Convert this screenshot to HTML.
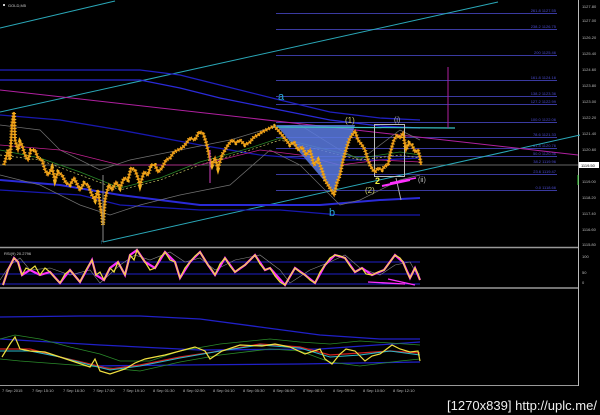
<!DOCTYPE html>
<html><head><meta charset="utf-8"><style>
html,body{margin:0;padding:0;background:#000;width:600px;height:415px;overflow:hidden}
svg{display:block}
text{font-family:"Liberation Sans",sans-serif}
</style></head><body>
<svg width="600" height="415" viewBox="0 0 600 415" xmlns="http://www.w3.org/2000/svg">
<rect width="600" height="415" fill="#000"/>
<rect x="3" y="4" width="2" height="2" fill="#ccc"/>
<text x="8" y="7" font-size="4" fill="#ccc">GOLD,M5</text>
<line x1="578.5" y1="0" x2="578.5" y2="386" stroke="#bbb" stroke-width="1"/>
<g font-size="4" fill="#bbb">
<text x="582" y="8">1127.80</text><text x="582" y="22">1127.00</text><text x="582" y="39">1126.20</text><text x="582" y="55">1125.40</text><text x="582" y="71">1124.60</text><text x="582" y="87">1123.80</text><text x="582" y="103">1123.00</text><text x="582" y="119">1122.20</text><text x="582" y="135">1121.40</text><text x="582" y="151">1120.60</text><text x="582" y="183">1119.00</text><text x="582" y="199">1118.20</text><text x="582" y="215">1117.40</text><text x="582" y="231">1116.60</text><text x="582" y="246">1115.80</text>
<text x="582" y="258">100</text><text x="582" y="274">50</text><text x="582" y="284">0</text>
</g>
<rect x="579" y="162" width="20" height="6" fill="#fff"/>
<text x="581" y="167" font-size="4" fill="#000">1119.50</text>
<line x1="578" y1="175" x2="578" y2="185" stroke="#3c3" stroke-width="1"/>
<line x1="0" y1="247.5" x2="578" y2="247.5" stroke="#999" stroke-width="1.5"/>
<line x1="0" y1="288" x2="578" y2="288" stroke="#999" stroke-width="1.5"/>
<line x1="0" y1="385.5" x2="578" y2="385.5" stroke="#999" stroke-width="1"/>
<g stroke="#3a3aa0" stroke-width="1">
<line x1="276" y1="13.5" x2="557" y2="13.5"/><line x1="276" y1="29.5" x2="557" y2="29.5"/><line x1="276" y1="55.5" x2="557" y2="55.5"/><line x1="276" y1="80.5" x2="557" y2="80.5"/><line x1="276" y1="96.5" x2="557" y2="96.5"/><line x1="276" y1="104.5" x2="557" y2="104.5"/><line x1="276" y1="122.5" x2="557" y2="122.5"/><line x1="276" y1="137.5" x2="557" y2="137.5"/><line x1="276" y1="148.5" x2="557" y2="148.5"/><line x1="276" y1="156.5" x2="557" y2="156.5"/><line x1="276" y1="174.5" x2="557" y2="174.5"/><line x1="276" y1="190.5" x2="557" y2="190.5"/>
</g>
<line x1="0" y1="165" x2="578" y2="165" stroke="#888" stroke-width="0.7"/>
<g font-size="4" fill="#4a4ad0" text-anchor="end">
<text x="556" y="12">261.8 1127.55</text><text x="556" y="28">238.2 1126.75</text><text x="556" y="54">200 1125.46</text><text x="556" y="79">161.8 1124.16</text><text x="556" y="95">138.2 1123.36</text><text x="556" y="103">127.2 1122.99</text><text x="556" y="121">100.0 1122.06</text><text x="556" y="136">78.6 1121.33</text><text x="556" y="147">61.8 1120.76</text><text x="556" y="155">50.0 1120.36</text><text x="556" y="163">38.2 1119.96</text><text x="556" y="173">23.6 1119.47</text><text x="556" y="189">0.0 1118.66</text>
</g>
<line x1="0" y1="28" x2="115" y2="1" stroke="#2aa8b8" stroke-width="1"/>
<line x1="0" y1="112" x2="498" y2="2" stroke="#2aa8b8" stroke-width="1"/>
<line x1="103" y1="242" x2="580" y2="135" stroke="#2aa8b8" stroke-width="1"/>
<line x1="0" y1="90" x2="578" y2="155" stroke="#b020a0" stroke-width="1"/>
<g fill="none" stroke-width="1.3">
<polyline stroke="#2020c0" points="0,70 140,70 180,75 220,85 280,100 330,112 380,118 420,120"/>
<polyline stroke="#2a2ad8" points="0,80 140,80 180,88 220,98 280,110 330,120 380,126 420,128"/>
<polyline stroke="#1818b0" points="0,115 60,120 120,130 200,145 260,155 320,160 380,160 420,158"/>
<polyline stroke="#2a2ad8" stroke-width="2" points="0,180 60,185 120,195 200,205 260,205 320,205 380,200 420,198"/>
<polyline stroke="#1818b0" points="0,190 80,195 120,205 200,210 280,210 340,215 420,215"/>
<polyline stroke="#707070" stroke-width="0.7" points="0,125 40,130 60,150 100,170 130,160 180,150 230,140 270,128 300,125 340,150 360,160 400,130 420,140"/>
<polyline stroke="#707070" stroke-width="0.7" points="0,175 40,185 80,205 110,215 140,205 180,195 230,185 270,150 300,165 340,205 360,200 400,180 420,175"/>
<polyline stroke="#c0c060" stroke-width="0.7" stroke-dasharray="2,2" points="0,155 40,160 80,175 120,190 160,180 200,165 250,150 280,140 320,150 360,160 400,155 420,158"/>
<polyline stroke="#2a8a2a" stroke-width="0.7" points="0,150 40,158 80,172 120,188 160,178 200,162 250,148 280,138 320,148 360,158 400,152 420,155"/>
<polyline stroke="#c02090" stroke-width="0.8" points="0,145 60,150 120,165 200,165 260,150 300,155 340,165 380,160 420,162"/>
</g>
<polygon points="276,125 355,125 334,192" fill="#5a7ae0" opacity="0.85"/>
<line x1="276" y1="127" x2="455" y2="128" stroke="#3ac0c0" stroke-width="1.2"/>
<line x1="448" y1="67" x2="448" y2="128" stroke="#b020a0" stroke-width="1"/>
<rect x="374.5" y="124.5" width="30" height="52" fill="none" stroke="#bbb" stroke-width="1"/>
<g fill="none">
<polyline id="p" stroke="#e08a10" stroke-width="2" points="4,165 6,158 8,150 10,160 12,125 14,112 15,140 18,150 20,142 22,145 25,155 28,160 31,150 35,150 38,158 42,160 45,170 48,175 52,168 55,180 58,172 62,175 66,183 70,185 74,178 80,190 84,183 88,185 92,195 95,200 98,190 100,205 102,215 103,225 105,200 106,195 109,185 112,190 116,182 120,188 124,178 128,180 131,168 135,170 138,178 140,185 144,172 148,175 151,165 155,165 158,172 162,168 166,160 170,158 174,152 178,150 182,148 185,145 190,138 195,140 199,132 203,133 206,142 208,150 210,160 212,165 215,158 218,168 222,155 225,150 228,145 232,140 236,143 240,140 245,145 250,142 254,137 258,135 262,132 266,130 270,128 274,126 278,130 282,135 286,140 290,145 294,142 298,150 302,147 306,155 310,150 314,165 318,160 322,170 325,180 328,185 331,190 334,195 337,183 340,175 343,160 346,150 349,140 352,135 355,131 358,140 362,145 365,150 368,160 370,165 373,170 375,172 378,168 382,170 385,166 388,165 391,150 394,140 397,135 400,138 403,133 406,150 409,143 412,145 415,152 418,150 420,158 421,165"/>
<polyline stroke="#f0b020" stroke-width="4" stroke-dasharray="1,2" points="4,165 6,158 8,150 10,160 12,125 14,112 15,140 18,150 20,142 22,145 25,155 28,160 31,150 35,150 38,158 42,160 45,170 48,175 52,168 55,180 58,172 62,175 66,183 70,185 74,178 80,190 84,183 88,185 92,195 95,200 98,190 100,205 102,215 103,225 105,200 106,195 109,185 112,190 116,182 120,188 124,178 128,180 131,168 135,170 138,178 140,185 144,172 148,175 151,165 155,165 158,172 162,168 166,160 170,158 174,152 178,150 182,148 185,145 190,138 195,140 199,132 203,133 206,142 208,150 210,160 212,165 215,158 218,168 222,155 225,150 228,145 232,140 236,143 240,140 245,145 250,142 254,137 258,135 262,132 266,130 270,128 274,126 278,130 282,135 286,140 290,145 294,142 298,150 302,147 306,155 310,150 314,165 318,160 322,170 325,180 328,185 331,190 334,195 337,183 340,175 343,160 346,150 349,140 352,135 355,131 358,140 362,145 365,150 368,160 370,165 373,170 375,172 378,168 382,170 385,166 388,165 391,150 394,140 397,135 400,138 403,133 406,150 409,143 412,145 415,152 418,150 420,158 421,165"/>
</g>
<line x1="103" y1="175" x2="103" y2="242" stroke="#888" stroke-width="1"/>
<line x1="210" y1="150" x2="210" y2="183" stroke="#d040c0" stroke-width="1"/>
<line x1="396" y1="178" x2="401" y2="200" stroke="#aaa" stroke-width="1"/>
<polyline points="382,186 410,180" stroke="#ff30ff" stroke-width="2" fill="none"/>
<polyline points="390,183 416,178" stroke="#ff30ff" stroke-width="1.5" fill="none"/>
<g font-size="11" fill="#2aa8d8"><text x="278" y="100">a</text><text x="329" y="216">b</text></g>
<g font-size="8" fill="#d0d070"><text x="345" y="123">(1)</text><text x="365" y="193">(2)</text></g>
<text x="375" y="184" font-size="9" fill="#f0f040" font-weight="bold">2</text>
<g font-size="7" fill="#bbb"><text x="394" y="122">(i)</text><text x="418" y="182">(ii)</text></g>
<text x="100" y="244" font-size="6" fill="#2aa8d8">↑</text>
<text x="272" y="128" font-size="6" fill="#2aa8d8">↓</text>
<text x="4" y="255" font-size="4" fill="#ccc">RSI(9) 20.2796</text>
<g stroke="#2020c8" stroke-width="1">
<line x1="0" y1="262" x2="420" y2="262"/><line x1="0" y1="274" x2="420" y2="274"/><line x1="0" y1="284" x2="420" y2="284"/>
</g>
<polyline fill="none" stroke="#888" stroke-width="0.6" points="0,280 10,265 20,258 30,270 50,268 70,275 90,270 100,283 120,265 135,255 150,260 170,252 185,262 200,258 215,270 235,260 260,255 280,270 290,283 310,270 330,262 345,255 360,268 380,275 395,265 410,262 420,280"/>
<polyline fill="none" stroke="#ff30ff" stroke-width="2.2" points="3,285 8,270 14,258 18,262 22,275 30,270 40,275 50,272 60,283 70,270 80,282 92,260 96,275 104,280 110,268 118,262 125,275 130,255 137,250 145,262 155,268 165,252 175,262 180,278 190,262 200,252 208,265 215,275 225,258 235,272 245,265 255,255 265,270 270,268 285,285 295,268 305,275 315,283 325,265 335,255 345,258 355,272 362,268 372,275 384,270 395,255 403,262 410,278 415,268 420,280"/>
<polyline fill="none" stroke="#f0e040" stroke-width="1.2" points="3,285 6,276 8,270 11,264 14,258 18,262 20,270 22,275 26,268 30,270 35,266 40,275 45,268 50,272 55,278 60,283 65,274 70,270 75,276 80,282 86,270 92,260 96,275 100,272 104,280 110,268 114,272 118,262 125,275 130,255 134,260 137,250 142,258 145,262 150,270 155,268 160,258 165,252 170,260 175,262 180,278 185,268 190,262 195,256 200,252 208,265 212,270 215,275 220,264 225,258 230,266 235,272 240,268 245,265 250,260 255,255 260,264 265,270 270,268 275,276 280,282 285,285 290,276 295,268 300,272 305,275 310,280 315,283 320,272 325,265 330,258 335,255 340,256 345,258 350,266 355,272 362,268 366,274 372,275 378,272 384,270 390,262 395,255 400,258 403,262 407,272 410,278 415,268 418,274 420,280"/>
<line x1="368" y1="282" x2="405" y2="284" stroke="#ff30ff" stroke-width="1.3"/>
<line x1="388" y1="279" x2="415" y2="285" stroke="#ff30ff" stroke-width="1.3"/>
<g fill="none" transform="translate(0,-11)">
<polyline stroke="#2020c8" stroke-width="1.3" points="0,328 80,327 140,327 200,330 260,338 320,346 380,350 420,350"/>
<polyline stroke="#2020c8" stroke-width="1.3" points="0,350 100,356 200,361 320,360 420,353"/>
<polyline stroke="#2020c8" stroke-width="1.3" points="90,387 180,386 300,385 420,383" transform="translate(0,-10)"/>
<polyline stroke="#2a8a2a" stroke-width="0.8" points="0,350 15,346 40,350 70,358 100,365 120,372 150,372 180,362 220,355 270,350 300,353 330,355 360,352 420,356"/>
<polyline stroke="#2a8a2a" stroke-width="0.8" points="0,370 20,372 60,375 100,378 140,382 180,373 220,366 270,360 300,362 330,373 360,377 400,372 420,370"/>
<polyline stroke="#d02020" stroke-width="1.3" points="0,360 30,360 60,368 90,375 110,380 140,376 180,368 220,362 260,355 300,358 330,366 360,364 390,362 420,364"/>
<polyline stroke="#2ab8c8" stroke-width="1" points="0,362 30,362 60,368 90,376 110,381 140,377 180,369 220,362 260,356 300,359 330,368 360,366 390,362 420,366"/>
<polyline stroke="#f0e040" stroke-width="1.2" points="2,368 10,355 15,348 20,360 30,362 45,363 60,368 75,373 90,378 95,370 100,382 110,385 125,380 135,374 145,370 165,366 180,362 195,358 205,362 210,370 222,362 240,356 262,357 275,355 290,358 305,365 320,360 325,370 332,375 340,365 346,360 355,362 365,372 372,367 380,365 392,356 400,360 410,363 418,362 420,372"/>
</g>
<g font-size="4" fill="#bbb">
<text x="2" y="392">7 Sep 2015</text><text x="32" y="392">7 Sep 15:10</text><text x="63" y="392">7 Sep 16:30</text><text x="93" y="392">7 Sep 17:50</text><text x="123" y="392">7 Sep 19:10</text><text x="153" y="392">8 Sep 01:30</text><text x="183" y="392">8 Sep 02:50</text><text x="213" y="392">8 Sep 04:10</text><text x="243" y="392">8 Sep 05:30</text><text x="273" y="392">8 Sep 06:50</text><text x="303" y="392">8 Sep 08:10</text><text x="333" y="392">8 Sep 09:30</text><text x="363" y="392">8 Sep 10:50</text><text x="393" y="392">8 Sep 12:10</text>
</g>
<text x="447" y="410" font-size="13" fill="#eee" textLength="150" lengthAdjust="spacingAndGlyphs">[1270x839] http://uplc.me/</text>
</svg>
</body></html>
